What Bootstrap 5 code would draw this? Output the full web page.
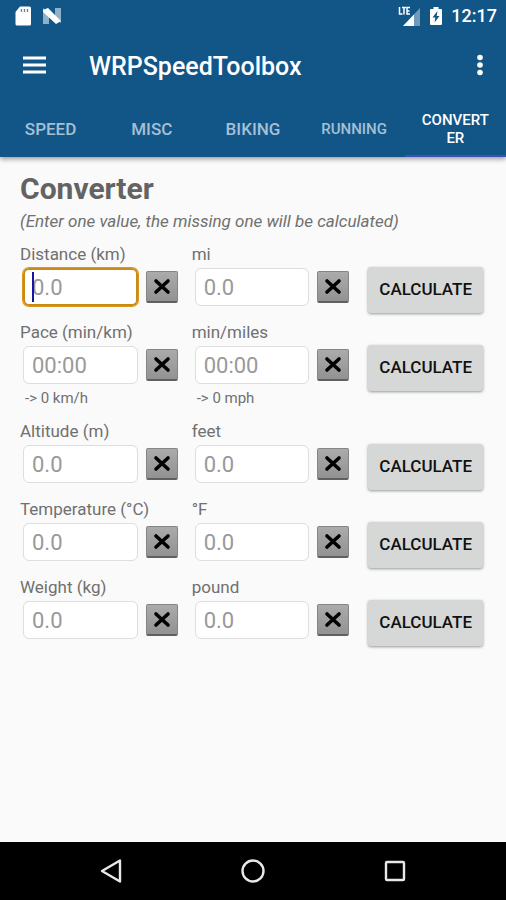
<!DOCTYPE html>
<html lang="en">
<head>
<meta charset="utf-8">
<meta name="viewport" content="width=device-width, initial-scale=1">
<title>WRPSpeedToolbox</title>
<link href="https://cdn.jsdelivr.net/npm/bootstrap@5.3.0/dist/css/bootstrap.min.css" rel="stylesheet">
<style>
  body { font-family: Roboto, "Noto Sans", sans-serif; background: #fafafa; color: #707070; }
  .app-head { background: #125688; box-shadow: 0 2px 5px rgba(0, 0, 0, .4); }
  .status { height: 32px; padding: 0 9px 0 14px; font-size: 18px; line-height: 32px; font-weight: 500; }
  .toolbar { height: 66px; padding: 0 14px 0 22px; }
  .toolbar h1 { font-size: 25px; line-height: 32px; font-weight: 500; padding-top: 3px; margin-left: 42px; }
  .plain { background: none; border: 0; padding: 0; color: inherit; display: flex; }
  .tabs { height: 59px; }
  .tabs .nav-link { height: 59px; padding: 4px 14px 0; border-radius: 0; border-bottom: 2px solid transparent; color: #a5c0d5; font-size: 17px; line-height: 18px; font-weight: 500; overflow-wrap: anywhere; }
  .tabs .nav-link.compact { font-size: 15px; }
  .tabs .nav-link.active { color: #fff; font-size: 15px; border-bottom-color: #3f51b5; }
  .page { padding: 16px 20px; }
  .page h2 { font-size: 30px; line-height: 32px; font-weight: 700; color: #636363; }
  .intro { font-size: 17px; line-height: 32px; margin-bottom: 7px; }
  .convert { display: grid; grid-template-columns: 7fr 7fr 5fr; }
  .pair { padding-bottom: 12px; }
  .pair label { display: block; font-size: 17px; line-height: 20px; white-space: nowrap; }
  .entry { margin: 4px 14px 4px 3px; gap: 8px; }
  .entry .form-control { height: 38px; min-width: 0; padding: 0 8px; font-size: 22px; line-height: 36px; border: 1px solid #dedede; border-radius: 6px; color: #666; }
  .entry .form-control::placeholder { color: #999; }
  .entry .current { border: 0; box-shadow: 0 0 0 1px #d99a20, inset 0 0 0 2px #c98a18; padding: 0 9px; }
  .caret { left: 9px; top: 4px; width: 2px; height: 30px; background: #1414a8; }
  .wipe { width: 32px; height: 32px; flex: none; border: 1px solid #858585; border-bottom: 2px solid #606060; border-radius: 2px; background: linear-gradient(#ababab, #929292); padding: 0; display: flex; align-items: center; justify-content: center; }
  .hint { display: block; padding-left: 5px; font-size: 15px; line-height: 21px; }
  .calc { height: 46px; margin: 23px 3px 0 5px; padding: 0; border: 0; border-radius: 3px; background: #d6d7d7; color: #111; font-size: 17px; font-weight: 500; box-shadow: 0 1px 3px rgba(0, 0, 0, .4); }
  .sysbar { height: 58px; background: #000; color: #e8e8e8; padding: 0 40px; }
</style>
</head>
<body class="d-flex flex-column min-vh-100">
<header class="app-head text-white">
  <div class="status d-flex align-items-center">
    <svg width="18" height="20" viewBox="0 0 18 20" aria-hidden="true"><path d="M6 .5H15.500Q17 .5 17 2V18Q17 19.500 15.500 19.500H3Q1.500 19.500 1.500 18V6Z" fill="#fff"/><path d="M7.500 3v3M10.500 3v3M13.500 3v3" stroke="#125688" stroke-width="1.300" opacity=".7"/></svg>
    <svg class="ms-2" width="24" height="18" viewBox="0 0 24 18" aria-hidden="true"><path d="M3 1 9 6V17H3ZM15 1H21V16L15 12Z" fill="#8fb0c9"/><path d="M3 3 8 1 21 14 16 17 3 5Z" fill="#fff"/></svg>
    <svg class="ms-auto" width="24" height="22" viewBox="0 0 24 22" aria-hidden="true"><path d="M23 3V21H6Z" fill="#6f9abb"/><path d="M17 9.500V21H6Z" fill="#fff"/><path d="M2.500 2V9H5.500M5 2.600H9M7 2.600V9.500M13 2.600H10V9H13M10 6H12.500" fill="none" stroke="#fff" stroke-width="1.500"/></svg>
    <svg class="ms-2" width="14" height="20" viewBox="0 0 14 20" aria-hidden="true"><path d="M4.500 1h5v2H12Q13 3 13 4V18Q13 19 12 19H2Q1 19 1 18V4Q1 3 2 3H4.500Z" fill="#fff"/><path d="M8.500 5 3.500 11.500H6.300L5.500 16.500 10.500 10H7.700Z" fill="#125688"/></svg>
    <span class="ms-2">12:17</span>
  </div>
  <div class="toolbar d-flex align-items-center">
    <button class="plain" type="button" aria-label="Open menu"><svg width="25" height="18" viewBox="0 0 25 18"><path d="M1 2H24M1 9H24M1 16H24" stroke="#fff" stroke-width="2.800"/></svg></button>
    <h1 class="mb-0">WRPSpeedToolbox</h1>
    <button class="plain ms-auto" type="button" aria-label="More options"><svg width="24" height="24" viewBox="0 0 24 24" fill="#fff"><circle cx="12" cy="4.500" r="2.800"/><circle cx="12" cy="12" r="2.800"/><circle cx="12" cy="19.500" r="2.800"/></svg></button>
  </div>
  <nav class="tabs row row-cols-5 g-0 text-center" aria-label="Sections">
    <a class="nav-link col d-flex align-items-center justify-content-center" href="#speed">SPEED</a>
    <a class="nav-link col d-flex align-items-center justify-content-center" href="#misc">MISC</a>
    <a class="nav-link col d-flex align-items-center justify-content-center" href="#biking">BIKING</a>
    <a class="nav-link compact col d-flex align-items-center justify-content-center" href="#running">RUNNING</a>
    <a class="nav-link active col d-flex align-items-center justify-content-center" href="#converter" aria-current="page">CONVERT<wbr>ER</a>
  </nav>
</header>

<svg class="d-none" aria-hidden="true"><symbol id="cross" viewBox="0 0 18 18"><path d="M3 3 15 14M15 3 3 14" stroke="#000" stroke-width="3.600" stroke-linecap="round"/></symbol></svg>

<main class="page flex-grow-1" id="converter">
  <h2 class="mb-0">Converter</h2>
  <p class="intro fst-italic">(Enter one value, the missing one will be calculated)</p>

  <form class="convert">
    <div class="pair"><label for="km">Distance (km)</label>
      <div class="entry d-flex align-items-center position-relative"><input class="form-control current" id="km" type="text" placeholder="0.0"><span class="caret position-absolute"></span><button class="wipe" type="button" aria-label="Clear kilometres"><svg width="18" height="18"><use href="#cross"/></svg></button></div></div>
    <div class="pair"><label for="mi">mi</label>
      <div class="entry d-flex align-items-center"><input class="form-control" id="mi" type="text" placeholder="0.0"><button class="wipe" type="button" aria-label="Clear miles"><svg width="18" height="18"><use href="#cross"/></svg></button></div></div>
    <button class="calc" type="button">CALCULATE</button>
  </form>

  <form class="convert">
    <div class="pair"><label for="pkm">Pace (min/km)</label>
      <div class="entry d-flex align-items-center"><input class="form-control" id="pkm" type="text" placeholder="00:00"><button class="wipe" type="button" aria-label="Clear pace per kilometre"><svg width="18" height="18"><use href="#cross"/></svg></button></div>
      <span class="hint">-&gt; 0 km/h</span></div>
    <div class="pair"><label for="pmi">min/miles</label>
      <div class="entry d-flex align-items-center"><input class="form-control" id="pmi" type="text" placeholder="00:00"><button class="wipe" type="button" aria-label="Clear pace per mile"><svg width="18" height="18"><use href="#cross"/></svg></button></div>
      <span class="hint">-&gt; 0 mph</span></div>
    <button class="calc" type="button">CALCULATE</button>
  </form>

  <form class="convert">
    <div class="pair"><label for="m">Altitude (m)</label>
      <div class="entry d-flex align-items-center"><input class="form-control" id="m" type="text" placeholder="0.0"><button class="wipe" type="button" aria-label="Clear metres"><svg width="18" height="18"><use href="#cross"/></svg></button></div></div>
    <div class="pair"><label for="ft">feet</label>
      <div class="entry d-flex align-items-center"><input class="form-control" id="ft" type="text" placeholder="0.0"><button class="wipe" type="button" aria-label="Clear feet"><svg width="18" height="18"><use href="#cross"/></svg></button></div></div>
    <button class="calc" type="button">CALCULATE</button>
  </form>

  <form class="convert">
    <div class="pair"><label for="c">Temperature (°C)</label>
      <div class="entry d-flex align-items-center"><input class="form-control" id="c" type="text" placeholder="0.0"><button class="wipe" type="button" aria-label="Clear Celsius"><svg width="18" height="18"><use href="#cross"/></svg></button></div></div>
    <div class="pair"><label for="f">°F</label>
      <div class="entry d-flex align-items-center"><input class="form-control" id="f" type="text" placeholder="0.0"><button class="wipe" type="button" aria-label="Clear Fahrenheit"><svg width="18" height="18"><use href="#cross"/></svg></button></div></div>
    <button class="calc" type="button">CALCULATE</button>
  </form>

  <form class="convert">
    <div class="pair"><label for="kg">Weight (kg)</label>
      <div class="entry d-flex align-items-center"><input class="form-control" id="kg" type="text" placeholder="0.0"><button class="wipe" type="button" aria-label="Clear kilograms"><svg width="18" height="18"><use href="#cross"/></svg></button></div></div>
    <div class="pair"><label for="lb">pound</label>
      <div class="entry d-flex align-items-center"><input class="form-control" id="lb" type="text" placeholder="0.0"><button class="wipe" type="button" aria-label="Clear pounds"><svg width="18" height="18"><use href="#cross"/></svg></button></div></div>
    <button class="calc" type="button">CALCULATE</button>
  </form>
</main>

<footer class="sysbar row row-cols-3 g-0 align-items-center">
  <button class="plain col justify-content-center" type="button" aria-label="Back"><svg width="26" height="26" viewBox="0 0 26 26"><path d="M22 2.500V23.500L4 13Z" fill="none" stroke="currentColor" stroke-width="2.400" stroke-linejoin="round"/></svg></button>
  <button class="plain col justify-content-center" type="button" aria-label="Home"><svg width="26" height="26" viewBox="0 0 26 26"><circle cx="13" cy="13" r="10.500" fill="none" stroke="currentColor" stroke-width="2.400"/></svg></button>
  <button class="plain col justify-content-center" type="button" aria-label="Recent apps"><svg width="26" height="26" viewBox="0 0 26 26"><rect x="4" y="4" width="18" height="18" rx="1" fill="none" stroke="currentColor" stroke-width="2.400"/></svg></button>
</footer>
<script src="https://cdn.jsdelivr.net/npm/bootstrap@5.3.0/dist/js/bootstrap.bundle.min.js"></script>
</body>
</html>
